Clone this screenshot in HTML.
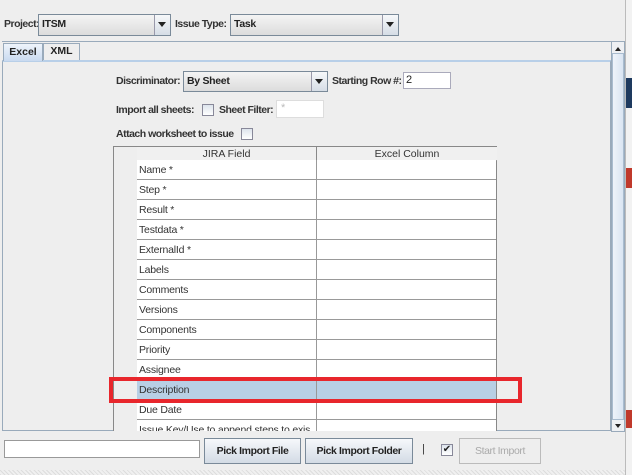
<html><head><style>
body{margin:0;width:632px;height:475px;background:#eeeeee;position:relative;overflow:hidden;font-family:"Liberation Sans",sans-serif;font-size:11px;color:#222}
.a{position:absolute}
.lbl{position:absolute;font-weight:bold;font-size:10.5px;letter-spacing:-0.5px;color:#333;white-space:nowrap}
.combo{position:absolute;border:1px solid #7a8a99;background:linear-gradient(#f4f4f4,#dcdcdc);box-sizing:border-box}
.combo .t{position:absolute;left:3px;top:3px;font-weight:bold;font-size:10.5px;letter-spacing:-0.3px}
.combo .b{position:absolute;right:0;top:0;bottom:0;width:15px;border-left:1px solid #99a;background:linear-gradient(#f6f8fa,#d6dde6)}
.combo .b:after{content:"";position:absolute;left:3px;top:7px;border:4px solid transparent;border-top:5px solid #222}
.fld{position:absolute;background:#fff;border:1px solid #aab;box-sizing:border-box}
.cb{position:absolute;width:10px;height:10px;border:1px solid #889;background:linear-gradient(#dde4ec,#fff)}
.row{position:absolute;left:137px;width:359px;height:20px;border-bottom:1px solid #999;box-sizing:border-box;background:#fff}
.row span{position:absolute;left:2px;top:4px;color:#333;font-size:10.5px;letter-spacing:-0.2px;white-space:nowrap}
.row:after{content:"";position:absolute;left:179px;top:0;bottom:0;border-left:1px solid #999}
.btn{position:absolute;border:1px solid #7a8a99;box-sizing:border-box;background:linear-gradient(#f6f8fb,#d3dbe5);font-weight:bold;text-align:center;line-height:24px;color:#222;font-size:10.5px;letter-spacing:-0.4px}
</style></head><body>
<div class="lbl" style="left:4px;top:18px">Project:</div>
<div class="combo" style="left:38px;top:14px;width:133px;height:22px"><div class="t">ITSM</div><div class="b"></div></div>
<div class="lbl" style="left:175px;top:18px">Issue Type:</div>
<div class="combo" style="left:230px;top:14px;width:169px;height:22px"><div class="t">Task</div><div class="b"></div></div>
<div class="a" style="left:2px;top:60px;width:609px;height:371px;border:1px solid #9ab;border-top:2px solid #b8cfe8;box-sizing:border-box;background:#eeeeee"></div>
<div class="a" style="left:2px;top:41px;width:609px;height:1px;background:#9ab"></div>
<div class="a" style="left:3px;top:43px;width:40px;height:18px;background:linear-gradient(#eef4fb,#c9daf0);border:1px solid #9ab;border-bottom:none;box-sizing:border-box;text-align:center;font-weight:bold;line-height:16px;font-size:10.5px">Excel</div>
<div class="a" style="left:43px;top:43px;width:37px;height:17px;border:1px solid #9ab;border-bottom:none;box-sizing:border-box;text-align:center;font-weight:bold;line-height:15px;font-size:10.5px">XML</div>
<div class="a" style="left:611px;top:41px;width:14px;height:391px;border:1px solid #9ab;box-sizing:border-box;background:#eef0f3"></div>
<div class="a" style="left:612px;top:53px;width:12px;height:367px;background:linear-gradient(90deg,#eef3fa,#dae5f2);border:1px solid #a9bccf;box-sizing:border-box"></div>
<div class="a" style="left:615px;top:44px;border:3px solid transparent;border-bottom:4px solid #222"></div>
<div class="a" style="left:615px;top:424px;border:3px solid transparent;border-top:4px solid #222"></div>
<div class="a" style="left:625px;top:0;width:7px;height:475px;background:#f2f2f2;border-left:1px solid #bbb"></div>
<div class="a" style="left:626px;top:78px;width:6px;height:30px;background:#1e3a5f"></div>
<div class="a" style="left:626px;top:168px;width:6px;height:20px;background:#c0392b"></div>
<div class="a" style="left:626px;top:410px;width:6px;height:18px;background:#c0392b"></div>
<div class="lbl" style="left:116px;top:75px">Discriminator:</div>
<div class="combo" style="left:183px;top:71px;width:145px;height:21px"><div class="t">By Sheet</div><div class="b"></div></div>
<div class="lbl" style="left:332px;top:75px">Starting Row #:</div>
<div class="fld" style="left:403px;top:72px;width:48px;height:17px;padding:1px 2px">2</div>
<div class="lbl" style="left:116px;top:104px">Import all sheets:</div>
<div class="cb" style="left:202px;top:104px"></div>
<div class="lbl" style="left:219px;top:104px">Sheet Filter:</div>
<div class="fld" style="left:276px;top:100px;width:48px;height:18px;border-color:#ddd;color:#bbb;padding:1px 4px">*</div>
<div class="lbl" style="left:116px;top:128px">Attach worksheet to issue</div>
<div class="cb" style="left:241px;top:128px"></div>
<div class="a" style="left:113px;top:146px;width:384px;height:285px;border:1px solid #888;border-bottom:none;box-sizing:border-box;background:#eeeeee"></div>
<div class="a" style="left:137px;top:147px;width:179px;height:13px;background:#f0f0f0;text-align:center;color:#333;line-height:14px;border-bottom:1px solid #999;font-size:10.5px">JIRA Field</div>
<div class="a" style="left:316px;top:147px;width:180px;height:13px;background:#f0f0f0;text-align:center;color:#333;line-height:14px;border-left:1px solid #888;border-bottom:1px solid #999;font-size:10.5px">Excel Column</div>
<div class="row" style="top:160px"><span>Name *</span></div>
<div class="row" style="top:180px"><span>Step *</span></div>
<div class="row" style="top:200px"><span>Result *</span></div>
<div class="row" style="top:220px"><span>Testdata *</span></div>
<div class="row" style="top:240px"><span>ExternalId *</span></div>
<div class="row" style="top:260px"><span>Labels</span></div>
<div class="row" style="top:280px"><span>Comments</span></div>
<div class="row" style="top:300px"><span>Versions</span></div>
<div class="row" style="top:320px"><span>Components</span></div>
<div class="row" style="top:340px"><span>Priority</span></div>
<div class="row" style="top:360px"><span>Assignee</span></div>
<div class="row" style="top:380px;background:#b8cfe5"><span>Description</span></div>
<div class="row" style="top:400px"><span>Due Date</span></div>
<div class="row" style="top:420px;height:11px;overflow:hidden;border:none"><span>Issue Key/Use to append steps to exis</span></div>
<div class="a" style="left:109px;top:377px;width:413px;height:26px;border:4px solid #e8262c;box-sizing:border-box"></div>
<div class="fld" style="left:4px;top:440px;width:196px;height:18px;border-color:#999"></div>
<div class="btn" style="left:204px;top:438px;width:97px;height:26px">Pick Import File</div>
<div class="btn" style="left:305px;top:438px;width:108px;height:26px">Pick Import Folder</div>
<div class="a" style="left:422px;top:443px;color:#333">|</div>
<div class="cb" style="left:441px;top:444px;font-size:10px;line-height:10px;text-align:center">✔</div>
<div class="btn" style="left:459px;top:438px;width:82px;height:26px;background:#eeeeee;border-color:#bbb;color:#aaa;font-weight:normal">Start Import</div>
<div class="a" style="left:0;top:470px;width:625px;height:5px;background:repeating-linear-gradient(45deg,#ddd 0 1px,#f0f0f0 1px 3px)"></div>
</body></html>
